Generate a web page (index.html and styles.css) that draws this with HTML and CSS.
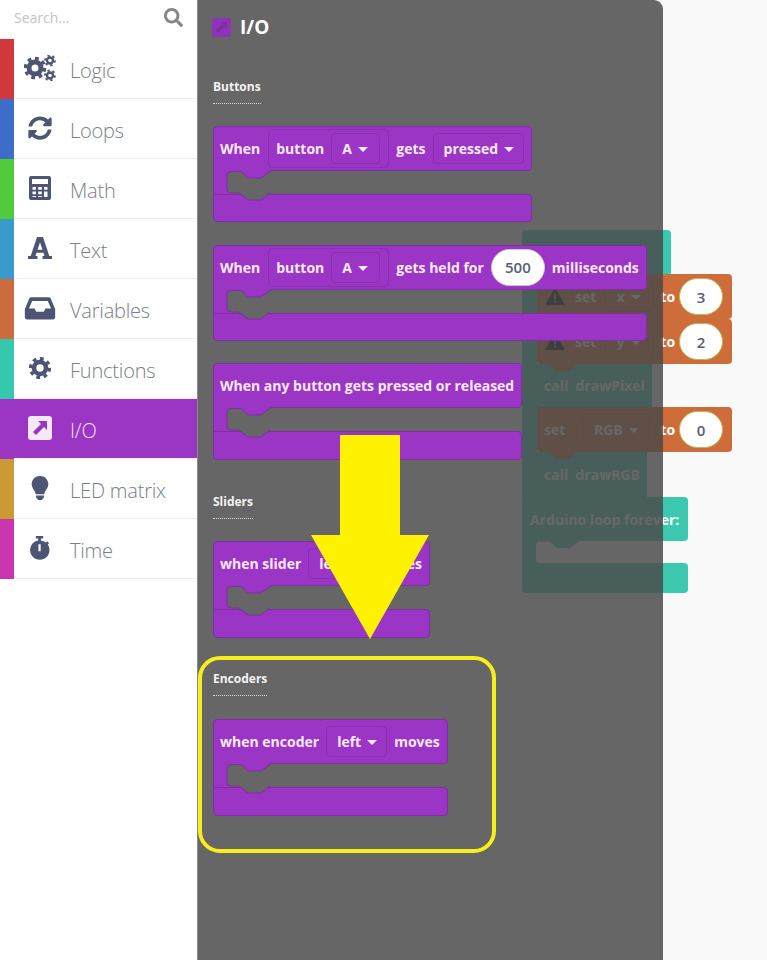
FILE: index.html
```html
<!DOCTYPE html>
<html lang="en">
<head>
<meta charset="utf-8">
<title>I/O blocks</title>
<link rel="stylesheet" href="styles.css">
</head>
<body>
<div class="app">
  <aside class="sidebar">
    <div class="search">
      <span class="search-text">Search...</span>
      <svg class="search-icon" viewBox="0 0 512 512"><path d="M505 442.7L405.3 343c-4.5-4.5-10.6-7-17-7H372c27.6-35.3 44-79.7 44-128C416 93.1 322.9 0 208 0S0 93.1 0 208s93.1 208 208 208c48.3 0 92.7-16.4 128-44v16.3c0 6.4 2.5 12.5 7 17l99.7 99.7c9.4 9.4 24.6 9.4 33.9 0l28.3-28.3c9.4-9.4 9.4-24.6.1-34zM208 336c-70.7 0-128-57.2-128-128 0-70.7 57.2-128 128-128 70.7 0 128 57.2 128 128 0 70.7-57.2 128-128 128z"/></svg>
    </div>
    <nav>
      <div class="cat-row"><span class="stripe s-red"></span><span class="cat-icon">
        <svg class="icon-wide" viewBox="0 0 32 26">
          <g class="gear-lg"><circle class="ring" cx="11" cy="13" r="6"/><circle class="teeth" cx="11" cy="13" r="9.6" pathLength="80"/></g>
          <g class="gear-sm"><circle class="ring" cx="26" cy="5.5" r="3"/><circle class="teeth" cx="26" cy="5.5" r="5" pathLength="80"/></g>
          <g class="gear-sm"><circle class="ring" cx="26" cy="20.5" r="3"/><circle class="teeth" cx="26" cy="20.5" r="5" pathLength="80"/></g>
        </svg></span><span class="cat-label">Logic</span></div>
      <div class="cat-row"><span class="stripe s-blue"></span><span class="cat-icon">
        <svg class="icon" viewBox="0 0 512 512"><path d="M370.72 133.28C339.458 104.008 298.888 87.962 255.848 88c-77.458.068-144.328 53.178-162.791 126.85-1.344 5.363-6.122 9.15-11.651 9.15H24.103c-7.498 0-13.194-6.807-11.807-14.176C33.933 94.924 134.813 8 256 8c66.448 0 126.791 26.136 171.315 68.685L463.03 40.97C478.149 25.851 504 36.559 504 57.941V192c0 13.255-10.745 24-24 24H345.941c-21.382 0-32.09-25.851-16.971-40.971l41.75-41.749zM32 296h134.059c21.382 0 32.09 25.851 16.971 40.971l-41.75 41.75c31.262 29.273 71.835 45.319 114.876 45.28 77.418-.07 144.315-53.144 162.787-126.849 1.344-5.363 6.122-9.15 11.651-9.15h57.304c7.498 0 13.193 6.807 11.807 14.176C478.067 417.076 377.187 504 256 504c-66.448 0-126.791-26.136-171.315-68.685L48.97 471.03C33.851 486.149 8 475.441 8 454.059V320c0-13.255 10.745-24 24-24z"/></svg></span><span class="cat-label">Loops</span></div>
      <div class="cat-row"><span class="stripe s-green"></span><span class="cat-icon">
        <svg class="icon" viewBox="0 0 24 24"><path fill-rule="evenodd" d="M3 0h18a2 2 0 0 1 2 2v20a2 2 0 0 1-2 2H3a2 2 0 0 1-2-2V2a2 2 0 0 1 2-2zM4 3v5h16V3zM4.500 11v2.800h3.500V11zM10.200 11v2.800h3.600V11zM16 11v2.800h3.500V11zM4.500 15.500v2.800h3.500v-2.800zM10.200 15.500v2.800h3.600v-2.800zM16 15.500v5.500h3.500v-5.500zM4.500 20v1h3.500v-1zM10.200 20v1h3.600v-1z"/></svg></span><span class="cat-label">Math</span></div>
      <div class="cat-row"><span class="stripe s-sky"></span><span class="cat-icon">
        <svg class="icon" viewBox="0 0 24 24"><path fill-rule="evenodd" d="M9 1h6l6.300 19H24v3h-9.500v-3h2l-1-3.300H8.500l-1 3.300h2v3H0v-3h2.700zM12 6.500L9.500 13.700h5z"/></svg></span><span class="cat-label">Text</span></div>
      <div class="cat-row"><span class="stripe s-orange"></span><span class="cat-icon">
        <svg class="icon-wide" viewBox="0 0 28 24"><path fill-rule="evenodd" d="M6 2h16a2 2 0 0 1 1.800 1L28 13v7a2.500 2.500 0 0 1-2.500 2.500h-23A2.500 2.500 0 0 1 0 20v-7L4.200 3A2 2 0 0 1 6 2zM6.800 5.500L3.800 12.500H9l1.500 3h7l1.500-3h5.200l-3-7z"/></svg></span><span class="cat-label">Variables</span></div>
      <div class="cat-row"><span class="stripe s-teal"></span><span class="cat-icon">
        <svg class="icon" viewBox="0 0 24 26"><g class="gear-lg"><circle class="ring" cx="12" cy="13" r="6.500"/><circle class="teeth" cx="12" cy="13" r="10.300" pathLength="80"/></g></svg></span><span class="cat-label">Functions</span></div>
      <div class="cat-row is-active"><span class="stripe s-purple"></span><span class="cat-icon">
        <svg class="icon" viewBox="0 0 24 24"><path fill-rule="evenodd" d="M3 0h18a3 3 0 0 1 3 3v18a3 3 0 0 1-3 3H3a3 3 0 0 1-3-3V3a3 3 0 0 1 3-3zM10 5l3 3-8 8 3 3 8-8 3 3V5z"/></svg></span><span class="cat-label">I/O</span></div>
      <div class="cat-row"><span class="stripe s-gold"></span><span class="cat-icon">
        <svg class="icon" viewBox="0 0 24 26"><path d="M12 0c5 0 9 3.800 9 8.800 0 4.500-3.500 6.700-4.500 11H7.500C6.500 15.500 3 13.300 3 8.800 3 3.800 7 0 12 0zM7.800 21h8.400v2a1.500 1.500 0 0 1-1 1.300L14 26h-4l-1.200-1.700a1.500 1.500 0 0 1-1-1.300z"/></svg></span><span class="cat-label">LED matrix</span></div>
      <div class="cat-row"><span class="stripe s-magenta"></span><span class="cat-icon">
        <svg class="icon" viewBox="0 0 24 26"><path fill-rule="evenodd" d="M7.500 0h8v2.600h-2.500v2.200a10.300 10.300 0 0 1 5.500 2.300l1.300-1.300 2 2-1.400 1.400A10.500 10.500 0 1 1 10 4.800V2.600H7.500zM10.300 9v7.500h2.400V9z"/></svg></span><span class="cat-label">Time</span></div>
    </nav>
  </aside>

  <main class="workspace">
    <div class="canvas-piece teal t-setup"><span class="ws-text">Arduino setup:</span></div>
    <div class="canvas-piece teal t-arm"></div>
    <div class="canvas-piece teal t-call1"><span class="ws-text">call&nbsp; drawPixel</span></div>
    <div class="canvas-piece teal t-call2"><span class="ws-text">call&nbsp; drawRGB</span></div>
    <div class="canvas-piece teal t-loop"><span class="ws-text">Arduino loop forever:</span></div>
    <svg class="canvas-piece t-loop-mouth" viewBox="0 0 60 30"><path class="fill-teal" d="M0 0H57L48 7H35L28 .5H18Q14 .5 14 4V18Q14 22 18 22V23H0Z"/><path class="hole-clear" d="M24 22L35 29H48L57 22Z"/></svg>
    <div class="canvas-piece teal t-loop-foot"></div>

    <div class="canvas-piece orange o-x">
      <svg class="warn" viewBox="0 0 20 17"><path fill-rule="evenodd" d="M10 0l10 17H0zM9 5.500v6h2v-6zM9 12.800v2h2v-2z"/></svg>
      <span class="ws-text o-set">set</span><span class="ws-drop dx">x<i class="caret"></i></span><span class="ws-text">to</span><span class="pill">3</span>
    </div>
    <div class="canvas-piece orange o-y">
      <svg class="warn" viewBox="0 0 20 17"><path fill-rule="evenodd" d="M10 0l10 17H0zM9 5.500v6h2v-6zM9 12.800v2h2v-2z"/></svg>
      <span class="ws-text o-set">set</span><span class="ws-drop dx">y<i class="caret"></i></span><span class="ws-text">to</span><span class="pill">2</span>
    </div>
    <svg class="canvas-piece tab tab-y" viewBox="0 0 30 8"><path class="fill-orange" d="M0 0L9 7H21L30 0Z"/></svg>
    <div class="canvas-piece orange o-rgb">
      <span class="ws-text o-set-plain">set</span><span class="ws-drop drgb">RGB<i class="caret"></i></span><span class="ws-text">to</span><span class="pill">0</span>
    </div>
    <svg class="canvas-piece tab tab-rgb" viewBox="0 0 30 8"><path class="fill-orange" d="M0 0L9 7H21L30 0Z"/></svg>

    <section class="flyout">
      <header class="fly-title">
        <svg class="fly-icon" viewBox="0 0 24 24"><path d="M3 0h18a3 3 0 0 1 3 3v18a3 3 0 0 1-3 3H3a3 3 0 0 1-3-3V3a3 3 0 0 1 3-3z"/><path class="fly-arrow" d="M10 5l3 3-8 8 3 3 8-8 3 3V5z"/></svg>
        <h1>I/O</h1>
      </header>

      <div class="group group-buttons">
        <h2 class="group-label">Buttons</h2>
        <div class="block">
          <div class="head">
            <span>When</span>
            <span class="nested"><span>button</span><span class="drop drop-a">A<i class="caret"></i></span></span>
            <span>gets</span>
            <span class="drop">pressed<i class="caret"></i></span>
          </div>
          <div class="mouth"><svg class="notch" viewBox="0 0 60 31"><path class="fill-purple" d="M0 0H58L48 8H35L28 1.500H18Q14 1.500 14 5V19Q14 23 18 23V24H0Z"/><path class="hole" d="M26 23L35 30H48L57 23Z"/><path class="edge" d="M58 1L48 8H35L28 1.500H18Q14 1.500 14 5V19Q14 23 18 23H26L35 30H48L57 23M.5 0V24"/></svg></div>
          <div class="foot"></div>
        </div>
        <div class="block">
          <div class="head">
            <span>When</span>
            <span class="nested"><span>button</span><span class="drop drop-a">A<i class="caret"></i></span></span>
            <span>gets held for</span>
            <span class="pill">500</span>
            <span>milliseconds</span>
          </div>
          <div class="mouth"><svg class="notch" viewBox="0 0 60 31"><path class="fill-purple" d="M0 0H58L48 8H35L28 1.500H18Q14 1.500 14 5V19Q14 23 18 23V24H0Z"/><path class="hole" d="M26 23L35 30H48L57 23Z"/><path class="edge" d="M58 1L48 8H35L28 1.500H18Q14 1.500 14 5V19Q14 23 18 23H26L35 30H48L57 23M.5 0V24"/></svg></div>
          <div class="foot"></div>
        </div>
        <div class="block">
          <div class="head">
            <span>When any button gets pressed or released</span>
          </div>
          <div class="mouth"><svg class="notch" viewBox="0 0 60 31"><path class="fill-purple" d="M0 0H58L48 8H35L28 1.500H18Q14 1.500 14 5V19Q14 23 18 23V24H0Z"/><path class="hole" d="M26 23L35 30H48L57 23Z"/><path class="edge" d="M58 1L48 8H35L28 1.500H18Q14 1.500 14 5V19Q14 23 18 23H26L35 30H48L57 23M.5 0V24"/></svg></div>
          <div class="foot"></div>
        </div>
      </div>

      <div class="group group-sliders">
        <h2 class="group-label">Sliders</h2>
        <div class="block">
          <div class="head">
            <span>when slider</span>
            <span class="drop">left<i class="caret"></i></span>
            <span>moves</span>
          </div>
          <div class="mouth"><svg class="notch" viewBox="0 0 60 31"><path class="fill-purple" d="M0 0H58L48 8H35L28 1.500H18Q14 1.500 14 5V19Q14 23 18 23V24H0Z"/><path class="hole" d="M26 23L35 30H48L57 23Z"/><path class="edge" d="M58 1L48 8H35L28 1.500H18Q14 1.500 14 5V19Q14 23 18 23H26L35 30H48L57 23M.5 0V24"/></svg></div>
          <div class="foot"></div>
        </div>
      </div>

      <div class="group group-encoders">
        <h2 class="group-label">Encoders</h2>
        <div class="block">
          <div class="head">
            <span>when encoder</span>
            <span class="drop">left<i class="caret"></i></span>
            <span>moves</span>
          </div>
          <div class="mouth"><svg class="notch" viewBox="0 0 60 31"><path class="fill-purple" d="M0 0H58L48 8H35L28 1.500H18Q14 1.500 14 5V19Q14 23 18 23V24H0Z"/><path class="hole" d="M26 23L35 30H48L57 23Z"/><path class="edge" d="M58 1L48 8H35L28 1.500H18Q14 1.500 14 5V19Q14 23 18 23H26L35 30H48L57 23M.5 0V24"/></svg></div>
          <div class="foot"></div>
        </div>
      </div>
    </section>

    <svg class="arrow" viewBox="0 0 118 204"><path d="M30 0H88a1 1 0 0 1 1 1V100H118L59 204 0 100H29V1a1 1 0 0 1 1-1z"/></svg>
    <div class="callout"></div>
  </main>
</div>
</body>
</html>
```
FILE: styles.css
```css
* { box-sizing: border-box; }
html, body { margin: 0; padding: 0; height: 100%; }
body { font-family: "Open Sans", "Liberation Sans", sans-serif; background: #fff; overflow: hidden; }

.app { display: flex; width: 767px; height: 960px; }

/* Sidebar */
.sidebar { flex: 0 0 198px; background: #fff; border-right: 1px solid #8a8a8a; }
.search { height: 39px; display: flex; align-items: center; justify-content: space-between; padding: 0 14px 4px 14px; }
.search-text { font-size: 14px; font-weight: 400; color: #c4c4c4; }
.search-icon { width: 19px; height: 19px; fill: #868686; }

.cat-row { display: flex; align-items: center; height: 60px; border-bottom: 1px solid #eeeeee; }
.stripe { flex: 0 0 14px; align-self: stretch; margin-bottom: -1px; }
.s-red { background: #d0383b; }
.s-blue { background: #3d6dc9; }
.s-green { background: #4fcb3c; }
.s-sky { background: #3a9ace; }
.s-orange { background: #cc6b3c; }
.s-teal { background: #35c8ae; }
.s-purple { background: #9a35c4; }
.s-gold { background: #cc9a35; }
.s-magenta { background: #c835ae; }

.cat-icon { flex: 0 0 56px; display: flex; justify-content: center; padding: 0 4px 2px 0; }
.icon { width: 24px; height: 24px; fill: #4c5573; display: block; }
.icon-wide { width: 32px; height: 26px; fill: #4c5573; display: block; }
.cat-label { font-size: 20px; font-weight: 300; color: #7a7e88; letter-spacing: -0.2px; padding-top: 3px; }
.cat-row.is-active { background: #9a35c4; }
.is-active .icon { fill: #f6e8fb; }
.is-active .cat-label { color: #f6e0fb; }

.ring { fill: none; stroke: #4c5573; stroke-width: 5; }
.teeth { fill: none; stroke: #4c5573; stroke-width: 3.4; stroke-dasharray: 5 5; }
.gear-sm .ring { stroke-width: 2.4; }
.gear-sm .teeth { stroke-width: 1.8; stroke-dasharray: 6 7.33; }

/* Workspace canvas */
.workspace { position: relative; flex: 1; background: #f9f9f9; font-weight: 700; font-size: 14px; color: #fbeaff; }
.canvas-piece { position: absolute; }
.teal { background: #3cc8ae; border-radius: 4px; display: flex; align-items: center; padding-left: 8px; color: #fff; }
.orange { background: #cf6d3a; border-radius: 4px; display: flex; align-items: center; color: #fff; }
.fill-teal { fill: #3cc8ae; }
.fill-orange { fill: #cf6d3a; }
.hole-clear { fill: #666; }
.t-setup { left: 324px; top: 230px; width: 149px; height: 46px; border-radius: 4px 4px 4px 0; }
.t-arm { left: 324px; top: 275px; width: 15px; height: 224px; border-radius: 0; }
.t-call1 { left: 339px; top: 364px; width: 115px; height: 46px; border-radius: 0; padding: 0 0 3px 7px; }
.t-call2 { left: 339px; top: 452px; width: 110px; height: 46px; border-radius: 0; padding: 0 0 2px 7px; }
.t-loop { left: 324px; top: 497px; width: 166px; height: 44px; border-radius: 4px 4px 4px 0; }
.t-loop-mouth { left: 324px; top: 541px; width: 60px; height: 30px; }
.t-loop-foot { left: 324px; top: 563px; width: 166px; height: 30px; border-radius: 0 4px 4px 4px; }
.o-x { left: 339px; top: 274px; width: 195px; height: 45px; padding-left: 8px; }
.o-y { left: 339px; top: 319px; width: 195px; height: 45px; padding-left: 8px; }
.o-rgb { left: 339px; top: 407px; width: 195px; height: 45px; padding-left: 7px; }
.tab { width: 30px; height: 8px; }
.tab-y { left: 350px; top: 364px; }
.tab-rgb { left: 350px; top: 452px; }
.warn { width: 20px; height: 17px; fill: #000; margin-right: 10px; }
.o-set { margin-right: 8px; }
.o-set-plain { margin-right: 17px; }
.ws-drop { display: flex; align-items: center; justify-content: center; height: 31px; border-radius: 4px; border: 1px solid #b85c30; }
.dx { width: 49px; margin-right: 7px; }
.drgb { width: 68px; margin-right: 10px; }
.orange .pill { margin-left: 4px; min-width: 44px; width: 44px; border-color: #b7b95a; }

/* Flyout */
.flyout { position: absolute; left: 0; top: 0; width: 465px; height: 960px; background: rgba(74, 74, 74, 0.84); border-radius: 0 9px 0 0; padding: 15px 0 0 15px; display: flex; flex-direction: column; align-items: flex-start; }
.fly-title { display: flex; align-items: center; height: 24px; margin: 0 0 39px -1px; gap: 9px; }
.fly-icon { width: 19px; height: 19px; fill: #8e34b8; }
.fly-arrow { fill: #7d2ea3; }
.fly-title h1 { margin: 0; font-size: 19px; font-weight: 700; color: #fff; line-height: 24px; }
.group { display: flex; flex-direction: column; align-items: flex-start; }
.group-buttons { margin-bottom: 33px; }
.group-sliders { margin-bottom: 32px; }
.group-label { margin: 0 0 22px; padding-bottom: 7px; border-bottom: 1px dotted #d8d8d8; font-size: 12px; line-height: 18px; font-weight: 700; color: #f4f4f4; }
.group-encoders .group-label { margin-bottom: 23px; }

.block { display: inline-flex; flex-direction: column; margin-bottom: 22.5px; }
.group .block:last-child { margin-bottom: 0; }
.group .block:last-child .foot { height: 29px; }
.head { display: flex; align-items: center; height: 45px; padding: 0 7px 0 6px; gap: 7px; background: #9a35c6; border: 1px solid #7f2ea3; border-radius: 4px 4px 4px 0; white-space: nowrap; }
.mouth { position: relative; height: 23px; }
.notch { position: absolute; left: 0; top: -1px; width: 60px; height: 31px; }
.fill-purple { fill: #9a35c6; }
.hole { fill: #666; }
.edge { fill: none; stroke: #7f2ea3; stroke-width: 1; }
.foot { height: 28px; background: #9a35c6; border: 1px solid #7f2ea3; border-radius: 0 4px 4px 4px; }

.nested { display: flex; align-items: center; gap: 7px; height: 39px; padding: 0 8px 0 7px; margin-left: 1px; border: 1px solid #8a2fb0; border-radius: 5px; }
.drop { display: flex; align-items: center; height: 31px; padding: 0 9px 0 10px; gap: 6px; border: 1px solid #8a2fb0; border-radius: 4px; }
.drop-a { min-width: 49px; }
.caret { display: inline-block; width: 0; height: 0; border-left: 5px solid transparent; border-right: 5px solid transparent; border-top: 5px solid currentColor; margin-top: 2px; }
.ws-drop .caret { margin-left: 6px; }
.pill { display: flex; align-items: center; justify-content: center; height: 37px; min-width: 54px; background: #fff; color: #575e75; border: 1px solid #c9c9d4; border-radius: 19px; font-weight: 600; font-size: 15px; }

/* Annotations */
.arrow { position: absolute; left: 113px; top: 435px; width: 118px; height: 204px; fill: #fff200; }
.callout { position: absolute; left: 0; top: 656px; width: 298px; height: 197px; border: 4px solid #f7ee1c; border-radius: 22px; }
```
